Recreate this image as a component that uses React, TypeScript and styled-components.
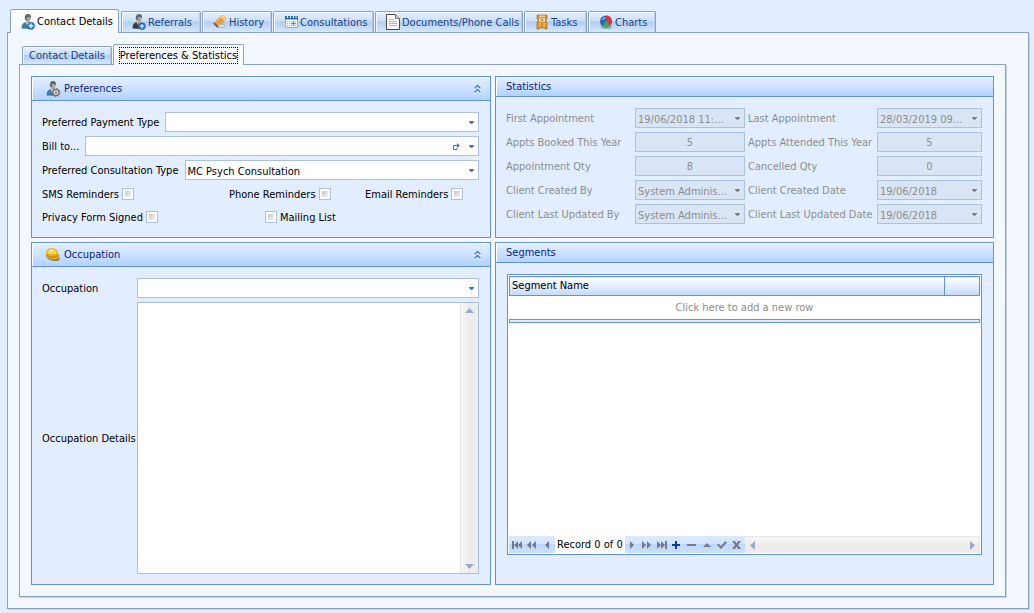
import React, { ReactNode, useState } from "react";
import styled, { createGlobalStyle, css } from "styled-components";

const color = {
  canvas: "#e2eeff",
  page: "#f3f8ff",
  tabBorder: "#8ba3c9",
  tabShade: "#c3d3ea",
  panelBorder: "#6593cf",
  fieldBorder: "#abc1de",
  disabled: "#d9e5f5",
  muted: "#8d8d8d",
  title: "#0b2380",
  glyph: "#4a78b0",
};

const GlobalStyle = createGlobalStyle`
  * { box-sizing: border-box; }
  body {
    margin: 0;
    background: ${color.canvas};
    color: #000;
    font: 11px/15px "DejaVu Sans Condensed", Tahoma, sans-serif;
  }
  button, input, select, textarea { font: inherit; color: inherit; margin: 0; }
`;

/* ---------- tabs and pages ---------- */

const Shell = styled.div`
  display: flex;
  flex-direction: column;
  min-height: 100vh;
  padding: 9px 5px 4px 7px;
`;

const TabStrip = styled.div`
  display: flex;
  align-items: flex-end;
  gap: 1px;
  padding-left: 3px;
`;

const MainTab = styled.button<{ $width: number; $active?: boolean }>`
  display: flex;
  align-items: center;
  gap: 1px;
  width: ${(p) => p.$width}px;
  height: 21px;
  padding: 0 0 0 9px;
  white-space: nowrap;
  color: #17438f;
  border: 1px solid ${color.tabBorder};
  border-bottom: 0;
  border-radius: 2px 2px 0 0;
  background: linear-gradient(#e6f0fd, #cbdff6 45%, #b1cdef 50%, #c4dbf7 75%, #d6e7fc);
  box-shadow: inset 1px 1px 0 #f2f8ff, inset -1px 0 0 #b5cbe8;
  ${(p) =>
    p.$active &&
    css`
      position: relative;
      height: 24px;
      margin-bottom: -1px;
      margin-right: 1px;
      color: #000;
      background: linear-gradient(#fff, ${color.page});
      box-shadow: inset 1px 1px 0 #fff;
    `}
`;

const SubTab = styled(MainTab)`
  justify-content: center;
  height: ${(p) => (p.$active ? "21px" : "18px")};
  padding: 0;
  margin-right: 0;
`;

const FocusText = styled.span`
  outline: 1px dotted #000;
`;

const Page = styled.div`
  display: flex;
  flex-direction: column;
  flex: 1;
  padding: 11px 22px 11px 11px;
  border: 1px solid ${color.tabBorder};
  background: ${color.page};
  box-shadow: 1px 1px 0 ${color.tabShade};
`;

const SubPage = styled(Page)`
  padding: 11px;
`;

const Panels = styled.main`
  flex: 1;
  display: grid;
  grid-template-columns: 460fr 499fr;
  grid-template-rows: auto 1fr;
  gap: 4px;
`;

/* ---------- panels ---------- */

const PanelBox = styled.section`
  display: flex;
  flex-direction: column;
  min-width: 0;
  border: 1px solid ${color.panelBorder};
  background: ${color.canvas};
`;

const PanelHeader = styled.header<{ $tall?: boolean }>`
  display: flex;
  align-items: center;
  gap: 3px;
  height: ${(p) => (p.$tall ? 24 : 20)}px;
  padding: 0 8px 0 ${(p) => (p.$tall ? 13 : 10)}px;
  border-bottom: 1px solid ${color.panelBorder};
  background: linear-gradient(#e3efff, #cde2ff 50%, #afd2ff);
  box-shadow: inset 1px 1px 0 #fff;
`;

const PanelTitle = styled.h2`
  flex: 1;
  margin: 0;
  font-size: 11px;
  font-weight: normal;
  color: ${color.title};
`;

const IconButton = styled.button`
  display: grid;
  place-items: center;
  padding: 0;
  border: 0;
  background: none;
`;

const PanelBody = styled.div`
  flex: 1;
  display: flex;
  flex-direction: column;
  gap: 4px;
  padding: 11px 11px 10px 10px;
`;

/* ---------- fields ---------- */

const FieldRow = styled.div`
  display: flex;
  align-items: center;
  gap: 6px;
`;

const Combo = styled.div<{ $disabled?: boolean }>`
  flex: 1;
  display: grid;
  align-items: center;
  min-width: 0;
  height: 20px;
  border: 1px solid ${color.fieldBorder};
  background: ${(p) => (p.$disabled ? color.disabled : "#fff")};
  color: ${(p) => (p.$disabled ? color.muted : "#000")};
  > * {
    grid-area: 1 / 1;
  }
`;

const Select = styled.select`
  appearance: none;
  width: 100%;
  min-width: 0;
  height: 18px;
  padding: 2px 14px 0 2px;
  border: 0;
  border-radius: 0;
  background: none;
  outline: 0;
  &:disabled {
    opacity: 1;
    color: ${color.muted};
  }
`;

const ComboGlyphs = styled.span`
  display: flex;
  align-items: center;
  justify-self: end;
  gap: 8px;
  padding: 1px 3px 0 0;
  pointer-events: none;
`;

const NumberBox = styled.input`
  width: 100%;
  min-width: 0;
  height: 20px;
  padding: 0;
  text-align: center;
  border: 1px solid ${color.fieldBorder};
  background: ${color.disabled};
  &:disabled {
    color: ${color.muted};
  }
`;

const CheckGrid = styled.div<{ $columns: string }>`
  display: grid;
  grid-template-columns: ${(p) => p.$columns};
  align-items: center;
  height: 20px;
`;

const CheckLabel = styled.label`
  display: flex;
  align-items: center;
  gap: 3px;
  white-space: nowrap;
`;

const CheckBox = styled.input`
  appearance: none;
  width: 12px;
  height: 12px;
  border: 1px solid ${color.fieldBorder};
  background: linear-gradient(135deg, #c3c7ce, #f6f6f6) content-box, #fff;
  padding: 2px;
  &:checked {
    background: #4a78b0 content-box;
  }
`;

const CheckRows = styled.div`
  display: grid;
  gap: 3px;
`;

const StatGrid = styled.div`
  display: grid;
  grid-template-columns: 126fr 110fr 126fr 105fr;
  align-items: center;
  gap: 4px 3px;
`;

const StatLabel = styled.label`
  color: ${color.muted};
  white-space: nowrap;
`;

const OccupationGrid = styled.div`
  flex: 1;
  display: grid;
  grid-template-columns: 95px 1fr;
  grid-template-rows: 20px 1fr;
  align-items: center;
  gap: 4px 0;
`;

const MemoBox = styled.div`
  align-self: stretch;
  display: flex;
  border: 1px solid ${color.fieldBorder};
  background: #fff;
`;

const Memo = styled.textarea`
  flex: 1;
  min-width: 0;
  padding: 2px;
  border: 0;
  outline: 0;
  resize: none;
  overflow: hidden;
`;

const VerticalBar = styled.div`
  display: flex;
  flex-direction: column;
  justify-content: space-between;
  width: 18px;
  padding: 5px 0 4px;
  border-left: 1px solid #e6e6e6;
  background: linear-gradient(90deg, #f7f7f7, #ececec 50%, #eee);
`;

/* ---------- segment list ---------- */

const SegmentBody = styled.div`
  flex: 1;
  display: flex;
  padding-bottom: 19px;
`;

const ListBox = styled.div`
  flex: 1;
  display: flex;
  flex-direction: column;
  margin-left: 1px;
  padding: 1px;
  border: 1px solid ${color.panelBorder};
  background: #fff;
`;

const SegmentTable = styled.table`
  width: 100%;
  border-collapse: collapse;
  table-layout: fixed;
`;

const HeadCell = styled.th<{ $width?: string }>`
  width: ${(p) => p.$width ?? "auto"};
  height: 19px;
  padding: 0 2px 2px;
  text-align: left;
  font-weight: normal;
  border: 1px solid ${color.panelBorder};
  background: linear-gradient(#fff, #e2ecfd 50%, #c4dafc);
`;

const NewRowCell = styled.td`
  height: 23px;
  padding: 0;
  text-align: center;
  color: ${color.muted};
`;

const RowDivider = styled.div`
  height: 4px;
  border: 1px solid ${color.panelBorder};
  background: ${color.canvas};
`;

const ListFooter = styled.div`
  display: flex;
  height: 17px;
  margin-top: auto;
`;

const Navigator = styled.div`
  display: flex;
  align-items: stretch;
  background: linear-gradient(#dceaff, #d3e4ff 45%, #bcd7fd 50%, #cbe0ff);
`;

const NavButton = styled(IconButton)`
  width: 15px;
`;

const RecordText = styled.span`
  display: flex;
  align-items: center;
  padding: 0 2px;
  margin-left: 1px;
  background: #fff;
  white-space: nowrap;
`;

const HorizontalBar = styled.div`
  flex: 1;
  display: flex;
  justify-content: space-between;
  padding: 0 5px;
  border-top: 1px solid #e6e6e6;
  background: linear-gradient(#f7f7f7, #ececec 50%, #eee);
`;

/* ---------- glyphs and icons ---------- */

const Caret = ({ muted }: { muted?: boolean }) => (
  <svg width="7" height="4" viewBox="0 0 7 4" aria-hidden="true">
    {muted && <path d="M1 1h6L4 4z" fill="#fff" />}
    <path d="M1 0h5v1L4 3H3L1 1z" fill={muted ? "#808080" : color.glyph} />
  </svg>
);

const Arrow = ({ d, w, h }: { d: string; w: number; h: number }) => (
  <svg width={w} height={h} viewBox={`0 0 ${w} ${h}`} aria-hidden="true">
    <path d={d} fill="#9aa8cc" />
  </svg>
);

const Redirect = () => (
  <svg width="8" height="8" viewBox="0 0 8 8" aria-hidden="true">
    <path d="M5 2.500H1.500v4H5V5" fill="none" stroke={color.glyph} />
    <path d="M5 0l3 2.500-3 2.500z" fill={color.glyph} />
  </svg>
);

const Collapse = () => (
  <svg width="9" height="10" viewBox="0 0 9 10" aria-hidden="true">
    <path d="M1 5.500l3.500-3.500 3.500 3.500M1 9.500L4.500 6 8 9.500" fill="none" stroke="#fff" strokeWidth="2" />
    <path d="M1.500 4.500l3-3 3 3M1.500 8.500l3-3 3 3" fill="none" stroke="#3a74b4" strokeWidth="1.300" />
  </svg>
);

const navPaths: Record<string, string> = {
  first: "M0 0h2v8H0zM2 4l4-4v8zM6 4l4-4v8z",
  rewind: "M0 4l4-4v8zM5 4l4-4v8z",
  previous: "M3 4l4-4v8z",
  next: "M3 0l4 4-4 4z",
  forward: "M0 0l4 4-4 4zM5 0l4 4-4 4z",
  last: "M0 0l4 4-4 4zM4 0l4 4-4 4zM8 0h2v8H8z",
  add: "M3 0h2v3h3v2H5v3H3V5H0V3h3z",
  remove: "M0 3h9v2H0z",
  edit: "M1 6l4-4 4 4z",
  accept: "M0 4l1.500-1.500L4 5l4.500-5L10 1.500 4 8z",
  cancel: "M0 0h3l1.500 2.500L6 0h3L6 4l3 4H6L4.500 5.500 3 8H0l3-4z",
};

const NavGlyph = ({ name }: { name: string }) => (
  <svg width="10" height="8" viewBox="0 0 10 8" aria-hidden="true">
    <path d={navPaths[name]} fill={name === "add" ? "#143f8e" : "#747b87"} />
  </svg>
);

const Icon = ({ children }: { children: ReactNode }) => (
  <svg width="16" height="16" viewBox="0 0 16 16" aria-hidden="true">
    {children}
  </svg>
);

const Person = ({ coat = "#3f7da8", shirt = "#dfe9ee" }: { coat?: string; shirt?: string }) => (
  <>
    <path d="M1.500 14.500c0-3.500 1-5.500 4-6.500h4l2 3-1 4z" fill={coat} />
    <path d="M5.500 8.200l2.500 4.300 1.500-4.500z" fill={shirt} />
    <path d="M5.500 3.500C5.500 1 7 .5 8 .5c2 0 3 1.300 2.700 3.500L9.700 7.500 7.500 9 6 7z" fill="#a9a39e" />
    <path d="M5 5.500C4.300 2 5.800 0 8.200 0c2.300 0 3.300 1.500 2.800 4.500L9.800 3 7.300 3 6.200 6.500z" fill="#62676b" />
  </>
);

const ContactIcon = () => (
  <Icon>
    <Person />
    <circle cx="11" cy="11.800" r="3.600" fill="#2f7fd3" stroke="#1c5ba8" strokeWidth=".6" />
    <path d="M11 9.500v4.600M8.700 11.800h4.600" stroke="#e4f3ff" strokeWidth="1.500" />
  </Icon>
);

const ReferralIcon = () => (
  <Icon>
    <Person coat="#353d46" />
    <path d="M7.500 9l.8 3" stroke="#a8333b" />
    <circle cx="11" cy="12.200" r="3.400" fill="#2a74c9" stroke="#1a4f97" strokeWidth=".6" />
    <path d="M11 10v4.400M8.800 12.200h4.400" stroke="#d5ecff" strokeWidth="1.200" />
  </Icon>
);

const PreferenceIcon = () => (
  <Icon>
    <Person />
    <circle cx="11" cy="11.500" r="3" fill="#e4dfda" stroke="#7d7774" strokeWidth="1.300" />
    <circle cx="11" cy="11.500" r="4.100" fill="none" stroke="#7d7774" strokeWidth="1" strokeDasharray="1.700 1.500" />
    <circle cx="11" cy="11.500" r="1" fill="#6a6462" />
  </Icon>
);

const HistoryIcon = () => (
  <Icon>
    <path d="M1 9.500l2-1.500 4 4.500L5.500 14z" fill="#8f5b34" />
    <path d="M2.500 9L9 2.200c1.500-1.500 5 .3 5 2.800L8.500 11 5.500 9.500z" fill="#f0ae51" stroke="#d58a33" strokeWidth=".7" />
    <path d="M9 2.200c1.500-1.500 5 .3 5 2.800L12 7c.2-2.500-2-3.600-4.500-3.300z" fill="#fbd18a" />
    <path d="M6.500 7.500l1.800 1.800M8.500 5.500l1.500 1.800" stroke="#b5651d" />
    <path d="M6 13l2-3 5 1.500-1.500 2z" fill="#dfe5ec" stroke="#8b99a8" strokeWidth=".6" />
  </Icon>
);

const CalendarIcon = () => (
  <Icon>
    <path d="M2.500 2.500h12v11h-12z" fill="#fbfdff" stroke="#8fb0d6" />
    <path d="M2 2h13v3.500H2z" fill="#2c6fb4" />
    <path d="M4.500 1v3M7.500 1v3M10.500 1v3M13 1v3" stroke="#d9ecfb" />
    <path d="M4 7.500h9M4 9.500h9M4 11.500h9" stroke="#d9a0a6" strokeDasharray="1 1" />
    <path d="M8.500 9.500h4M10.500 7.500v4" stroke="#4e90dc" strokeWidth="1.300" />
  </Icon>
);

const DocumentIcon = () => (
  <Icon>
    <path d="M1.500.5h9l4 4v11h-13z" fill="#f7f7f5" stroke="#4b4b4b" />
    <path d="M10.500.5v4h4" fill="#d6d6d6" stroke="#777" />
    <path d="M4 5.500h5M4 7.500h8M4 9.500h8M4 11.500h8" stroke="#b5b5b5" />
  </Icon>
);

const TaskIcon = () => (
  <Icon>
    <path d="M3 1h10v4h-1v3h1v7h-2v-1H5v1H3V8h1V5H3z" fill="#d8943a" stroke="#a5651c" strokeWidth=".7" />
    <path d="M5 1.500h6v1.500H5z" fill="#f3d28e" />
    <path d="M5 4.500h6v3H5z" fill="#fff3cf" />
    <path d="M4.500 9h7v1.500h-7zM4.500 11.500h7V13h-7z" fill="#efb656" />
    <path d="M6.500 6h3M7.500 9.800h1M7.500 12.300h1" stroke="#7a4710" />
  </Icon>
);

const ChartIcon = () => (
  <Icon>
    <ellipse cx="8.500" cy="13" rx="6" ry="2" fill="#9fb0c8" />
    <circle cx="8" cy="7.500" r="6" fill="#2c66b5" />
    <path d="M8.300 7V1.500A6 6 0 0 1 12.800 11z" fill="#e0343c" />
    <path d="M8.300 6.500l4.200 5a6 6 0 0 1-8.200.8z" fill="#3fa75a" />
    <path d="M3.500 6c.8-2 2-2.800 4-3v2z" fill="#7fb0e6" />
  </Icon>
);

const HatIcon = () => (
  <Icon>
    <path d="M1 9.500c2 4 9 5.500 13 4l1-3z" fill="#8d8468" />
    <path d="M1 7C1 3 4 1 7.500 1.300c4 .3 5.500 2.700 5.800 5.700 1.700 1 1.700 3-.1 4.500C9 13.300 3 12 1 9z" fill="#e0aa19" />
    <path d="M2 6c.5-3 3-4.300 5.500-4 3 .2 4.500 2 4.500 4.500C9 8 5 8 2 6z" fill="#f8d650" />
    <path d="M4 3.500c1-.8 3-1 4-.5L6 5z" fill="#fff3a8" />
    <path d="M1.500 8.500c3 2 7.500 2.500 11.500 0" fill="none" stroke="#b77f0d" />
  </Icon>
);

/* ---------- composed parts ---------- */

type PanelProps = { title: string; icon?: ReactNode; children: ReactNode };

const Panel = ({ title, icon, children }: PanelProps) => (
  <PanelBox>
    <PanelHeader $tall={Boolean(icon)}>
      {icon}
      <PanelTitle>{title}</PanelTitle>
      {icon && (
        <IconButton type="button" aria-label={`Collapse ${title}`}>
          <Collapse />
        </IconButton>
      )}
    </PanelHeader>
    <PanelBody>{children}</PanelBody>
  </PanelBox>
);

type ComboFieldProps = { id: string; value?: string; disabled?: boolean; redirect?: boolean };

const ComboField = ({ id, value = "", disabled, redirect }: ComboFieldProps) => (
  <Combo $disabled={disabled}>
    <Select id={id} defaultValue={value} disabled={disabled}>
      <option>{value}</option>
    </Select>
    <ComboGlyphs>
      {redirect && <Redirect />}
      <Caret muted={disabled} />
    </ComboGlyphs>
  </Combo>
);

const mainTabs = [
  { name: "Contact Details", TabIcon: ContactIcon, width: 109 },
  { name: "Referrals", TabIcon: ReferralIcon, width: 80 },
  { name: "History", TabIcon: HistoryIcon, width: 70 },
  { name: "Consultations", TabIcon: CalendarIcon, width: 101 },
  { name: "Documents/Phone Calls", TabIcon: DocumentIcon, width: 148 },
  { name: "Tasks", TabIcon: TaskIcon, width: 63 },
  { name: "Charts", TabIcon: ChartIcon, width: 68 },
];

const stats: { label: string; value: string; combo?: boolean }[] = [
  { label: "First Appointment", value: "19/06/2018 11:...", combo: true },
  { label: "Last Appointment", value: "28/03/2019 09...", combo: true },
  { label: "Appts Booked This Year", value: "5" },
  { label: "Appts Attended This Year", value: "5" },
  { label: "Appointment Qty", value: "8" },
  { label: "Cancelled Qty", value: "0" },
  { label: "Client Created By", value: "System Adminis...", combo: true },
  { label: "Client Created Date", value: "19/06/2018", combo: true },
  { label: "Client Last Updated By", value: "System Adminis...", combo: true },
  { label: "Client Last Updated Date", value: "19/06/2018", combo: true },
];

const Preferences = () => (
  <Panel title="Preferences" icon={<PreferenceIcon />}>
    <FieldRow>
      <label htmlFor="payment">Preferred Payment Type</label>
      <ComboField id="payment" />
    </FieldRow>
    <FieldRow>
      <label htmlFor="bill">Bill to...</label>
      <ComboField id="bill" redirect />
    </FieldRow>
    <FieldRow>
      <label htmlFor="consultation">Preferred Consultation Type</label>
      <ComboField id="consultation" value="MC Psych Consultation" />
    </FieldRow>
    <CheckRows>
      <CheckGrid $columns="187fr 136fr 114fr">
        <CheckLabel>
          SMS Reminders <CheckBox type="checkbox" />
        </CheckLabel>
        <CheckLabel>
          Phone Reminders <CheckBox type="checkbox" />
        </CheckLabel>
        <CheckLabel>
          Email Reminders <CheckBox type="checkbox" />
        </CheckLabel>
      </CheckGrid>
      <CheckGrid $columns="223fr 214fr">
        <CheckLabel>
          Privacy Form Signed <CheckBox type="checkbox" />
        </CheckLabel>
        <CheckLabel>
          <CheckBox type="checkbox" /> Mailing List
        </CheckLabel>
      </CheckGrid>
    </CheckRows>
  </Panel>
);

const Statistics = () => (
  <Panel title="Statistics">
    <StatGrid>
      {stats.map(({ label, value, combo }) => {
        const id = label.toLowerCase().replace(/ /g, "-");
        return (
          <React.Fragment key={id}>
            <StatLabel htmlFor={id}>{label}</StatLabel>
            {combo ? (
              <ComboField id={id} value={value} disabled />
            ) : (
              <NumberBox id={id} value={value} disabled readOnly />
            )}
          </React.Fragment>
        );
      })}
    </StatGrid>
  </Panel>
);

const Occupation = () => (
  <Panel title="Occupation" icon={<HatIcon />}>
    <OccupationGrid>
      <label htmlFor="occupation">Occupation</label>
      <ComboField id="occupation" />
      <label htmlFor="details">Occupation Details</label>
      <MemoBox>
        <Memo id="details" />
        <VerticalBar>
          <IconButton type="button" aria-label="Scroll up">
            <Arrow w={9} h={5} d="M0 5h9L4.500 0z" />
          </IconButton>
          <IconButton type="button" aria-label="Scroll down">
            <Arrow w={9} h={5} d="M0 0h9L4.500 5z" />
          </IconButton>
        </VerticalBar>
      </MemoBox>
    </OccupationGrid>
  </Panel>
);

const navButtons = (names: string[]) =>
  names.map((name) => (
    <NavButton key={name} type="button" aria-label={name}>
      <NavGlyph name={name} />
    </NavButton>
  ));

const Segments = () => (
  <Panel title="Segments">
    <SegmentBody>
      <ListBox>
        <SegmentTable>
          <thead>
            <tr>
              <HeadCell>Segment Name</HeadCell>
              <HeadCell $width="35px" aria-label="Actions" />
            </tr>
          </thead>
          <tbody>
            <tr>
              <NewRowCell colSpan={2}>Click here to add a new row</NewRowCell>
            </tr>
          </tbody>
        </SegmentTable>
        <RowDivider />
        <ListFooter>
          <Navigator>
            {navButtons(["first", "rewind", "previous"])}
            <RecordText>Record 0 of 0</RecordText>
            {navButtons(["next", "forward", "last", "add", "remove", "edit", "accept", "cancel"])}
          </Navigator>
          <HorizontalBar>
            <IconButton type="button" aria-label="Scroll left">
              <Arrow w={5} h={9} d="M5 0v9L0 4.500z" />
            </IconButton>
            <IconButton type="button" aria-label="Scroll right">
              <Arrow w={5} h={9} d="M0 0v9l5-4.500z" />
            </IconButton>
          </HorizontalBar>
        </ListFooter>
      </ListBox>
    </SegmentBody>
  </Panel>
);

export default function App() {
  const [tab, setTab] = useState("Contact Details");
  return (
    <>
      <GlobalStyle />
      <Shell>
        <TabStrip role="tablist">
          {mainTabs.map(({ name, TabIcon, width }) => (
            <MainTab
              key={name}
              type="button"
              role="tab"
              aria-selected={tab === name}
              $active={tab === name}
              $width={width}
              onClick={() => setTab(name)}
            >
              <TabIcon />
              {name}
            </MainTab>
          ))}
        </TabStrip>
        <Page>
          <TabStrip role="tablist">
            <SubTab type="button" role="tab" $width={90}>
              Contact Details
            </SubTab>
            <SubTab type="button" role="tab" aria-selected $active $width={131}>
              <FocusText>Preferences &amp; Statistics</FocusText>
            </SubTab>
          </TabStrip>
          <SubPage>
            <Panels>
              <Preferences />
              <Statistics />
              <Occupation />
              <Segments />
            </Panels>
          </SubPage>
        </Page>
      </Shell>
    </>
  );
}
